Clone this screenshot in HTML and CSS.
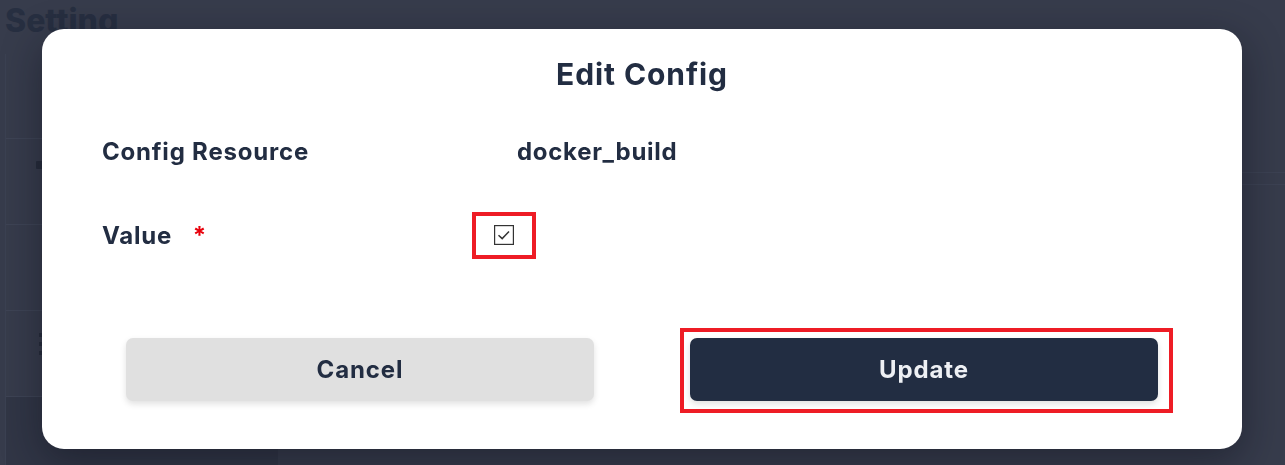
FILE: index.html
```html
<!DOCTYPE html>
<html>
<head>
<meta charset="utf-8">
<link rel="stylesheet" href="styles.css">
</head>
<body>
<div class="page">
  <h1 class="page-title">Setting</h1>
  <div class="layout">
    <div class="side-card">
      <div class="side-row"></div>
      <div class="side-row"><span class="ico-rect"></span></div>
      <div class="side-row"><span class="ico-paren">(</span></div>
      <div class="side-row"><span class="ico-lines"><i></i><i></i><i></i></span></div>
      <div class="side-row active"></div>
    </div>
    <div class="main-area">
      <div class="main-line"></div>
      <div class="main-line"></div>
    </div>
  </div>
</div>

<div class="overlay">
  <div class="modal">
    <h2 class="modal-title">Edit Config</h2>
    <div class="form">
      <div class="form-row">
        <div class="label">Config Resource</div>
        <div class="value">docker_build</div>
      </div>
      <div class="form-row">
        <div class="label">Value <span class="req">*</span></div>
        <div class="value value-check">
          <span class="highlight">
            <span class="checkbox">
              <svg viewBox="0 0 20 20" width="20" height="20"><rect x="0.6" y="0.6" width="18.8" height="18.8" fill="#fff" stroke="#333" stroke-width="1.2"/><path d="M4.5 10.2 L8.2 13.6 L15 6.4" fill="none" stroke="#333" stroke-width="1.5"/></svg>
            </span>
          </span>
        </div>
      </div>
    </div>
    <div class="actions">
      <button class="btn btn-cancel">Cancel</button>
      <div class="highlight-btn">
        <button class="btn btn-update">Update</button>
      </div>
    </div>
  </div>
</div>
</body>
</html>
```
FILE: styles.css
```css
* { box-sizing: border-box; }
html, body { margin: 0; padding: 0; }
body {
  width: 1285px;
  height: 465px;
  overflow: hidden;
  background: #373c4c;
  font-family: "Inter", "Liberation Sans", sans-serif;
  color: #222d42;
}
.page {
  height: 465px;
  padding: 0 0 0 5px;
}
.page-title {
  margin: 0;
  padding-top: 2px;
  font-size: 32px;
  line-height: 38px;
  font-weight: 800;
  color: #272f41;
}
.layout {
  display: flex;
  margin-top: 14px;
}
.side-card {
  width: 273px;
  border-left: 1px solid #3b4152;
  display: flex;
  flex-direction: column;
}
.side-row {
  height: 86px;
  border-bottom: 1px solid #3e4455;
  display: flex;
  align-items: flex-start;
  padding-left: 30px;
}
.side-row:first-child { height: 85px; }
.side-row:nth-child(2) { padding-top: 22px; }
.side-row:nth-child(3) { padding-top: 16px; padding-left: 34px; }
.side-row:nth-child(4) { padding-top: 22px; padding-left: 33px; }
.side-row.active {
  background: #313646;
  border-bottom: none;
  height: 70px;
}
.ico-rect {
  width: 8px;
  height: 8px;
  background: #262c3b;
  border-radius: 1px;
}
.ico-paren { color: #262c3b; font-size: 24px; font-weight: 700; line-height: 30px; }
.ico-lines { display: flex; flex-direction: column; gap: 5px; }
.ico-lines i { display: block; width: 7px; height: 4px; background: #262c3b; }
.main-area {
  flex: 1;
  padding-top: 118px;
}
.main-line {
  height: 12px;
  border-top: 1px solid #3c4253;
}

.overlay {
  position: fixed;
  inset: 0;
  display: flex;
  justify-content: flex-start;
  align-items: flex-start;
  padding: 29px 0 0 42px;
}
.modal {
  width: 1200px;
  height: 420px;
  background: #ffffff;
  border-radius: 22px;
  box-shadow: 0 12px 40px rgba(10, 14, 24, 0.45);
  padding: 0 60px;
  display: flex;
  flex-direction: column;
}
.modal-title {
  margin: 0;
  padding-top: 27px;
  text-align: center;
  font-size: 30px;
  line-height: 36px;
  font-weight: 700;
  color: #222d42;
  letter-spacing: 0.9px;
}
.form {
  margin-top: 20px;
  display: flex;
  flex-direction: column;
}
.form-row {
  display: flex;
  align-items: center;
  height: 84px;
}
.form-row:first-child { height: 80px; }
.form-row:first-child .label,
.form-row:first-child .value { margin-top: -2px; }
.form-row:nth-child(2) { padding-top: 2px; }
.label {
  width: 391px;
  font-size: 24px;
  font-weight: 700;
  letter-spacing: 0.8px;
  color: #222d42;
}
.req {
  color: #e8000b;
  margin-left: 14px;
}
.value {
  font-size: 24px;
  font-weight: 700;
  letter-spacing: 0.7px;
  padding-left: 24px;
  color: #222d42;
}
.value-check { padding-left: 0; }
.highlight {
  display: inline-flex;
  margin-left: -21px;
  width: 64px;
  height: 47px;
  border: 4px solid #ee1c25;
  align-items: center;
  justify-content: center;
}
.checkbox { display: flex; }
.actions {
  margin-top: auto;
  margin-bottom: 48px;
  display: grid;
  grid-template-columns: 468px 468px;
  column-gap: 96px;
  padding-left: 24px;
}
.btn {
  height: 63px;
  border: none;
  border-radius: 7px;
  font-family: "Inter", "Liberation Sans", sans-serif;
  font-size: 24px;
  font-weight: 700;
  letter-spacing: 0.9px;
  box-shadow: 0 3px 6px rgba(0, 0, 0, 0.12);
}
.btn-cancel {
  background: #e0e0e0;
  color: #222d42;
}
.highlight-btn {
  margin: -10px -15px -12px -10px;
  border: 4px solid #ee1c25;
  padding: 6px 11px 8px 6px;
}
.btn-update {
  width: 468px;
  background: #222d42;
  color: #eef0f4;
}
```
